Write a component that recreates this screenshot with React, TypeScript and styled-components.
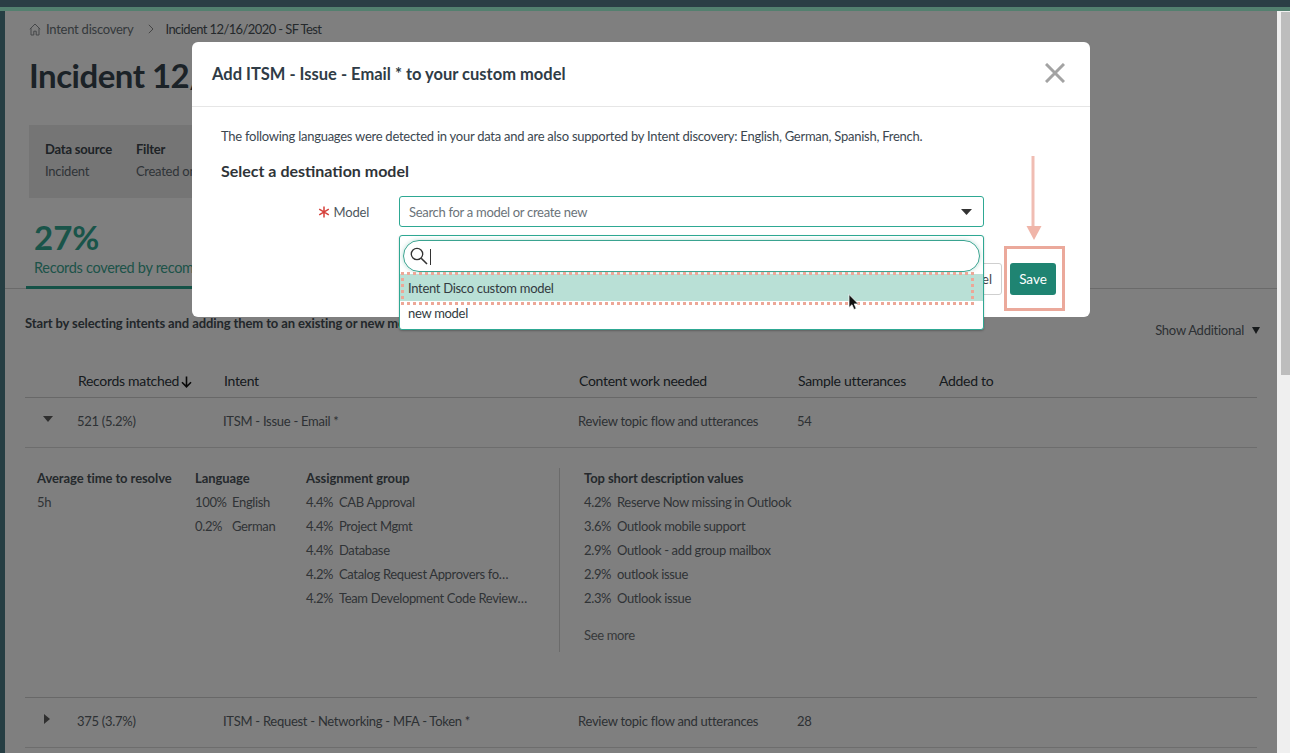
import styled, { createGlobalStyle } from "styled-components";

const GlobalStyle = createGlobalStyle`
  html, body {
    margin: 0;
    height: 753px;
    overflow: hidden;
    background: #fff;
    font-family: Lato, "Noto Sans", sans-serif;
  }
  * { box-sizing: border-box; }
`;

const assignments = [
  ["4.4%", "CAB Approval"],
  ["4.4%", "Project Mgmt"],
  ["4.4%", "Database"],
  ["4.2%", "Catalog Request Approvers fo…"],
  ["4.2%", "Team Development Code Review…"],
];

const descriptions = [
  ["4.2%", "Reserve Now missing in Outlook"],
  ["3.6%", "Outlook mobile support"],
  ["2.9%", "Outlook - add group mailbox"],
  ["2.9%", "outlook issue"],
  ["2.3%", "Outlook issue"],
];

function App() {
  return (
    <Shell>
      <GlobalStyle />
      <TopBar />
      <Body>
        <SideStrip />
        <Main>
          <Breadcrumb>
            <svg width="12" height="13" viewBox="0 0 12 13" fill="none" stroke="#8a8e92" strokeWidth="1">
              <path d="M0.8 6.2 6 1l5.2 5.2M2 5.2V12h2.8V8.2h2.4V12H10V5.2" />
            </svg>
            <CrumbLink>Intent discovery</CrumbLink>
            <svg width="6" height="10" viewBox="0 0 6 10" fill="none" stroke="#8a8a8a" strokeWidth="1">
              <path d="M0.8 0.8 5 5 0.8 9.2" />
            </svg>
            <CrumbCurrent>Incident 12/16/2020 - SF Test</CrumbCurrent>
          </Breadcrumb>
          <Title>Incident 12/16/2020 - SF Test</Title>
          <SummaryBox>
            <SummaryColumn>
              <strong>Data source</strong>
              <span>Incident</span>
            </SummaryColumn>
            <SummaryColumn>
              <strong>Filter</strong>
              <span>Created on</span>
            </SummaryColumn>
          </SummaryBox>
          <TabRow>
            <Tab>
              <TabValue>27%</TabValue>
              <TabLabel>Records covered by recommendations</TabLabel>
            </Tab>
          </TabRow>
          <IntroRow>
            <IntroText>Start by selecting intents and adding them to an existing or new model</IntroText>
            <ShowAdditional>
              Show Additional
              <svg width="8" height="7" viewBox="0 0 8 7" fill="#2f3438">
                <path d="M0 0h8L4 7z" />
              </svg>
            </ShowAdditional>
          </IntroRow>
          <Table>
            <HeaderRow>
              <span />
              <span>
                Records matched
                <svg width="11" height="12" viewBox="0 0 11 12" fill="none" stroke="#111" strokeWidth="1.6">
                  <path d="M5.5 0.5v10M1 6.2l4.5 4.6L10 6.2" />
                </svg>
              </span>
              <span>Intent</span>
              <span>Content work needed</span>
              <span>Sample utterances</span>
              <span>Added to</span>
            </HeaderRow>
            <DataRow>
              <Caret $open />
              <span>521 (5.2%)</span>
              <span>ITSM - Issue - Email *</span>
              <span>Review topic flow and utterances</span>
              <span>54</span>
              <span />
            </DataRow>
            <Details>
              <DetailColumn $width={158}>
                <DetailHead>Average time to resolve</DetailHead>
                <DetailLine>5h</DetailLine>
              </DetailColumn>
              <DetailColumn $width={111}>
                <DetailHead>Language</DetailHead>
                <DetailLine><Pct $wide>100%</Pct>English</DetailLine>
                <DetailLine><Pct $wide>0.2%</Pct>German</DetailLine>
              </DetailColumn>
              <DetailColumn $width={253}>
                <DetailHead>Assignment group</DetailHead>
                {assignments.map(([pct, name]) => (
                  <DetailLine key={name}><Pct>{pct}</Pct>{name}</DetailLine>
                ))}
              </DetailColumn>
              <DetailDivided>
                <DetailHead>Top short description values</DetailHead>
                {descriptions.map(([pct, name]) => (
                  <DetailLine key={name}><Pct>{pct}</Pct>{name}</DetailLine>
                ))}
                <SeeMore>See more</SeeMore>
              </DetailDivided>
            </Details>
            <DataRow>
              <Caret />
              <span>375 (3.7%)</span>
              <span>ITSM - Request - Networking - MFA - Token *</span>
              <span>Review topic flow and utterances</span>
              <span>28</span>
              <span />
            </DataRow>
          </Table>
          <Backdrop />
        </Main>
        <ScrollTrack>
          <ScrollThumb />
        </ScrollTrack>
      </Body>

      <Modal>
        <ModalHeader>
          <ModalTitle>Add ITSM - Issue - Email * to your custom model</ModalTitle>
          <svg width="20" height="20" viewBox="0 0 20 20" fill="none" stroke="#a3a3a3" strokeWidth="3">
            <path d="M1 1l18 18M19 1 1 19" />
          </svg>
        </ModalHeader>
        <ModalBody>
          <ModalText>
            The following languages were detected in your data and are also supported by Intent discovery: English, German, Spanish, French.
          </ModalText>
          <ModalHeading>Select a destination model</ModalHeading>
          <FieldRow>
            <FieldLabel>
              <svg width="12" height="12" viewBox="0 0 12 12" fill="none" stroke="#d6403a" strokeWidth="1.5">
                <path d="M6 0.5v11M1.2 3.2l9.6 5.6M10.8 3.2 1.2 8.8" />
              </svg>
              Model
            </FieldLabel>
            <SelectBox>
              Search for a model or create new
              <svg width="11" height="6" viewBox="0 0 11 6" fill="#333">
                <path d="M0 0h11L5.5 6z" />
              </svg>
            </SelectBox>
          </FieldRow>
        </ModalBody>
        <ModalFooter>
          <CancelButton>Cancel</CancelButton>
          <SaveButton>Save</SaveButton>
        </ModalFooter>

        <Dropdown>
          <SearchPill>
            <svg width="18" height="18" viewBox="0 0 18 18" fill="none" stroke="#333" strokeWidth="1.3">
              <circle cx="7" cy="7" r="5.7" />
              <path d="M11.2 11.2 17 17" strokeWidth="1.6" />
            </svg>
            <Caretline />
          </SearchPill>
          <Option $active>Intent Disco custom model</Option>
          <Option>new model</Option>
          <DottedMark />
        </Dropdown>
      </Modal>

      <SaveMark />
      <ArrowMark width="16" height="84" viewBox="0 0 16 84">
        <path d="M7 0v72" stroke="#f0bdb3" strokeWidth="3" fill="none" />
        <path d="M0.5 70h15L8 84z" fill="#f0b5a9" />
      </ArrowMark>
      <Pointer width="11" height="17" viewBox="0 0 11 17">
        <path d="M1 0.5v13l3-2.8 2 4.8 2.2-1-2-4.6h4.2z" fill="#111" stroke="#fff" strokeWidth="0.7" />
      </Pointer>
    </Shell>
  );
}

const Shell = styled.div`
  position: relative;
  width: 1290px;
  height: 753px;
  display: flex;
  flex-direction: column;
  overflow: hidden;
`;

const TopBar = styled.div`
  height: 11px;
  flex: none;
  background: #2b3e45;
  border-bottom: 4px solid #53806f;
`;

const Body = styled.div`
  flex: 1;
  display: flex;
  min-height: 0;
`;

const SideStrip = styled.div`
  width: 5px;
  flex: none;
  background: #263e43;
`;

const Main = styled.div`
  position: relative;
  flex: 1;
  min-width: 0;
  overflow: hidden;
  background: #fff;
  color: #5f6870;
`;

const Backdrop = styled.div`
  position: absolute;
  inset: 0;
  background: rgba(0, 0, 0, 0.5);
`;

const ScrollTrack = styled.div`
  width: 13px;
  flex: none;
  padding: 1px 0 0 4px;
  background: #efefef;
`;

const ScrollThumb = styled.div`
  height: 363px;
  background: #bdbdbd;
`;

const Breadcrumb = styled.div`
  display: flex;
  align-items: center;
  height: 20px;
  margin: 8px 0 0 24px;
  font-size: 13px;
  letter-spacing: -0.25px;
  svg:first-child { margin-right: 5px; }
  svg:nth-of-type(2) { margin: 0 11px 0 15px; }
`;

const CrumbLink = styled.span`
  color: #6a7278;
`;

const CrumbCurrent = styled.span`
  letter-spacing: -0.6px;
  color: #4a5258;
`;

const Title = styled.h1`
  margin: 14px 0 0 24px;
  height: 44px;
  font-size: 33px;
  line-height: 44px;
  font-weight: 700;
  letter-spacing: -0.5px;
  white-space: nowrap;
  color: #37454f;
`;

const SummaryBox = styled.div`
  display: flex;
  gap: 24px;
  width: 400px;
  height: 73px;
  margin: 28px 0 0 24px;
  padding: 15px 16px;
  background: #eaeaea;
`;

const SummaryColumn = styled.div`
  display: flex;
  flex-direction: column;
  gap: 4px;
  font-size: 13px;
  line-height: 18px;
  letter-spacing: -0.25px;
  white-space: nowrap;
  strong { color: #3d464d; font-weight: 700; letter-spacing: -0.2px; }
`;

const TabRow = styled.div`
  height: 91px;
  border-bottom: 1px solid #d4d4d4;
`;

const Tab = styled.div`
  width: 400px;
  height: 91px;
  margin-left: 21px;
  padding: 20px 0 0 8px;
  border-bottom: 3px solid #2aa58e;
`;

const TabValue = styled.div`
  font-size: 33px;
  line-height: 38px;
  font-weight: 700;
  color: #33a893;
`;

const TabLabel = styled.div`
  margin-top: 1px;
  font-size: 14.5px;
  line-height: 22px;
  letter-spacing: -0.3px;
  white-space: nowrap;
  color: #3aa692;
`;

const IntroRow = styled.div`
  position: relative;
  height: 20px;
  margin: 24px 17px 0 20px;
`;

const IntroText = styled.div`
  font-size: 13px;
  line-height: 20px;
  font-weight: 700;
  letter-spacing: -0.1px;
  color: #454e55;
`;

const ShowAdditional = styled.div`
  position: absolute;
  right: 0;
  top: 7px;
  display: flex;
  align-items: center;
  gap: 8px;
  font-size: 13px;
  line-height: 20px;
  letter-spacing: -0.25px;
  color: #5a6268;
`;

const Table = styled.div`
  margin: 36px 20px 0 20px;
`;

const columns = "52px 146px 355px 219px 141px 1fr";

const HeaderRow = styled.div`
  display: grid;
  grid-template-columns: ${columns};
  align-items: center;
  height: 29px;
  padding: 0 0 6px 1px;
  border-bottom: 1px solid #d0d0d0;
  font-size: 14px;
  letter-spacing: -0.3px;
  color: #2e363c;
  svg { margin-left: 2px; vertical-align: -2px; }
`;

const DataRow = styled.div`
  display: grid;
  grid-template-columns: ${columns};
  align-items: center;
  height: 50px;
  padding-bottom: 4px;
  border-bottom: 1px solid #dadada;
  font-size: 13px;
  letter-spacing: -0.28px;
  color: #5a6268;
`;

const Caret = styled.span<{ $open?: boolean }>`
  width: 0;
  height: 0;
  margin: -3px 0 0 ${(p) => (p.$open ? 18 : 19)}px;
  border-style: solid;
  ${(p) =>
    p.$open
      ? "border-width: 6px 5px 0 5px; border-color: #5e5e5e transparent transparent transparent;"
      : "border-width: 5px 0 5px 6px; border-color: transparent transparent transparent #5e5e5e;"}
`;

const Details = styled.div`
  display: flex;
  height: 250px;
  padding: 20px 0 0 12px;
  border-bottom: 1px solid #d0d0d0;
`;

const DetailColumn = styled.div<{ $width: number }>`
  flex: none;
  width: ${(p) => p.$width}px;
`;

const DetailDivided = styled.div`
  height: 184px;
  padding-left: 24px;
  border-left: 1px solid #d6d6d6;
`;

const DetailHead = styled.div`
  height: 20px;
  margin-bottom: 4px;
  font-size: 13px;
  line-height: 20px;
  font-weight: 700;
  letter-spacing: -0.08px;
  white-space: nowrap;
  color: #4a5359;
`;

const DetailLine = styled.div`
  height: 24px;
  font-size: 13px;
  line-height: 20px;
  letter-spacing: -0.35px;
  white-space: nowrap;
  color: #5f676d;
`;

const Pct = styled.span<{ $wide?: boolean }>`
  display: inline-block;
  width: ${(p) => (p.$wide ? 37 : 33)}px;
`;

const SeeMore = styled.div`
  margin-top: 13px;
  font-size: 13px;
  line-height: 20px;
  letter-spacing: -0.35px;
  color: #6e7276;
`;

const Modal = styled.div`
  position: absolute;
  left: 192px;
  top: 42px;
  width: 898px;
  height: 275px;
  display: flex;
  flex-direction: column;
  background: #fff;
  border-radius: 6px;
  color: #3c4750;
`;

const ModalHeader = styled.div`
  display: flex;
  justify-content: space-between;
  align-items: center;
  height: 65px;
  flex: none;
  padding: 0 25px 2px 20px;
  border-bottom: 1px solid #e6e6e6;
`;

const ModalTitle = styled.div`
  margin-top: 2px;
  font-size: 16.5px;
  font-weight: 700;
  color: #2f3c46;
`;

const ModalBody = styled.div`
  padding: 19px 29px 0 29px;
`;

const ModalText = styled.div`
  font-size: 13px;
  line-height: 20px;
  letter-spacing: -0.26px;
  white-space: nowrap;
`;

const ModalHeading = styled.div`
  margin-top: 14px;
  font-size: 16px;
  line-height: 22px;
  font-weight: 700;
  color: #2f3438;
`;

const FieldRow = styled.div`
  display: flex;
  align-items: center;
  gap: 30px;
  margin-top: 14px;
`;

const FieldLabel = styled.div`
  width: 148px;
  display: flex;
  justify-content: flex-end;
  align-items: center;
  gap: 4px;
  font-size: 13px;
  letter-spacing: -0.2px;
  color: #4d565d;
`;

const SelectBox = styled.div`
  width: 585px;
  height: 31px;
  display: flex;
  justify-content: space-between;
  align-items: center;
  padding: 0 11px 0 9px;
  border: 1px solid #2ea893;
  border-radius: 3px;
  font-size: 13px;
  letter-spacing: -0.3px;
  color: #6b7379;
`;

const ModalFooter = styled.div`
  display: flex;
  justify-content: flex-end;
  gap: 8px;
  margin-top: 36px;
  padding-right: 34px;
`;

const CancelButton = styled.div`
  height: 32px;
  display: flex;
  align-items: center;
  padding: 0 9px;
  border: 1px solid #cfcfcf;
  border-radius: 3px;
  font-size: 13px;
  color: #444;
`;

const SaveButton = styled.div`
  width: 46px;
  height: 32px;
  display: flex;
  justify-content: center;
  align-items: center;
  border-radius: 3px;
  background: #1f8472;
  font-size: 13.5px;
  color: #fff;
`;

const Dropdown = styled.div`
  position: absolute;
  left: 207px;
  top: 193px;
  width: 585px;
  height: 95px;
  padding-top: 4px;
  border: 1px solid #2ea893;
  border-radius: 3px;
  background: #fff;
  box-shadow: 0 1px 2px rgba(0, 0, 0, 0.25);
`;

const SearchPill = styled.div`
  display: flex;
  align-items: center;
  gap: 2px;
  height: 32px;
  margin: 0 3px;
  padding: 0 0 0 6px;
  border: 1px solid #3aa390;
  border-radius: 16px;
  box-shadow: 0 0 4px rgba(80, 170, 150, 0.4);
`;

const Caretline = styled.span`
  width: 1px;
  height: 16px;
  margin-top: 2px;
  background: #333;
`;

const Option = styled.div<{ $active?: boolean }>`
  height: ${(p) => (p.$active ? 27 : 26)}px;
  margin-top: ${(p) => (p.$active ? 2 : 0)}px;
  padding-left: 8px;
  font-size: 13px;
  line-height: ${(p) => (p.$active ? 28 : 25)}px;
  letter-spacing: -0.3px;
  color: #333b41;
  background: ${(p) => (p.$active ? "#b9e0d6" : "transparent")};
`;

const DottedMark = styled.div`
  position: absolute;
  left: 1px;
  top: 36px;
  width: 573px;
  height: 33px;
  border: 3px dotted #eda797;
`;

const SaveMark = styled.div`
  position: absolute;
  left: 1004px;
  top: 246px;
  width: 61px;
  height: 65px;
  border: 3px solid #eba99b;
`;

const ArrowMark = styled.svg`
  position: absolute;
  left: 1026px;
  top: 156px;
`;

const Pointer = styled.svg`
  position: absolute;
  left: 848px;
  top: 294px;
`;

export default App;
